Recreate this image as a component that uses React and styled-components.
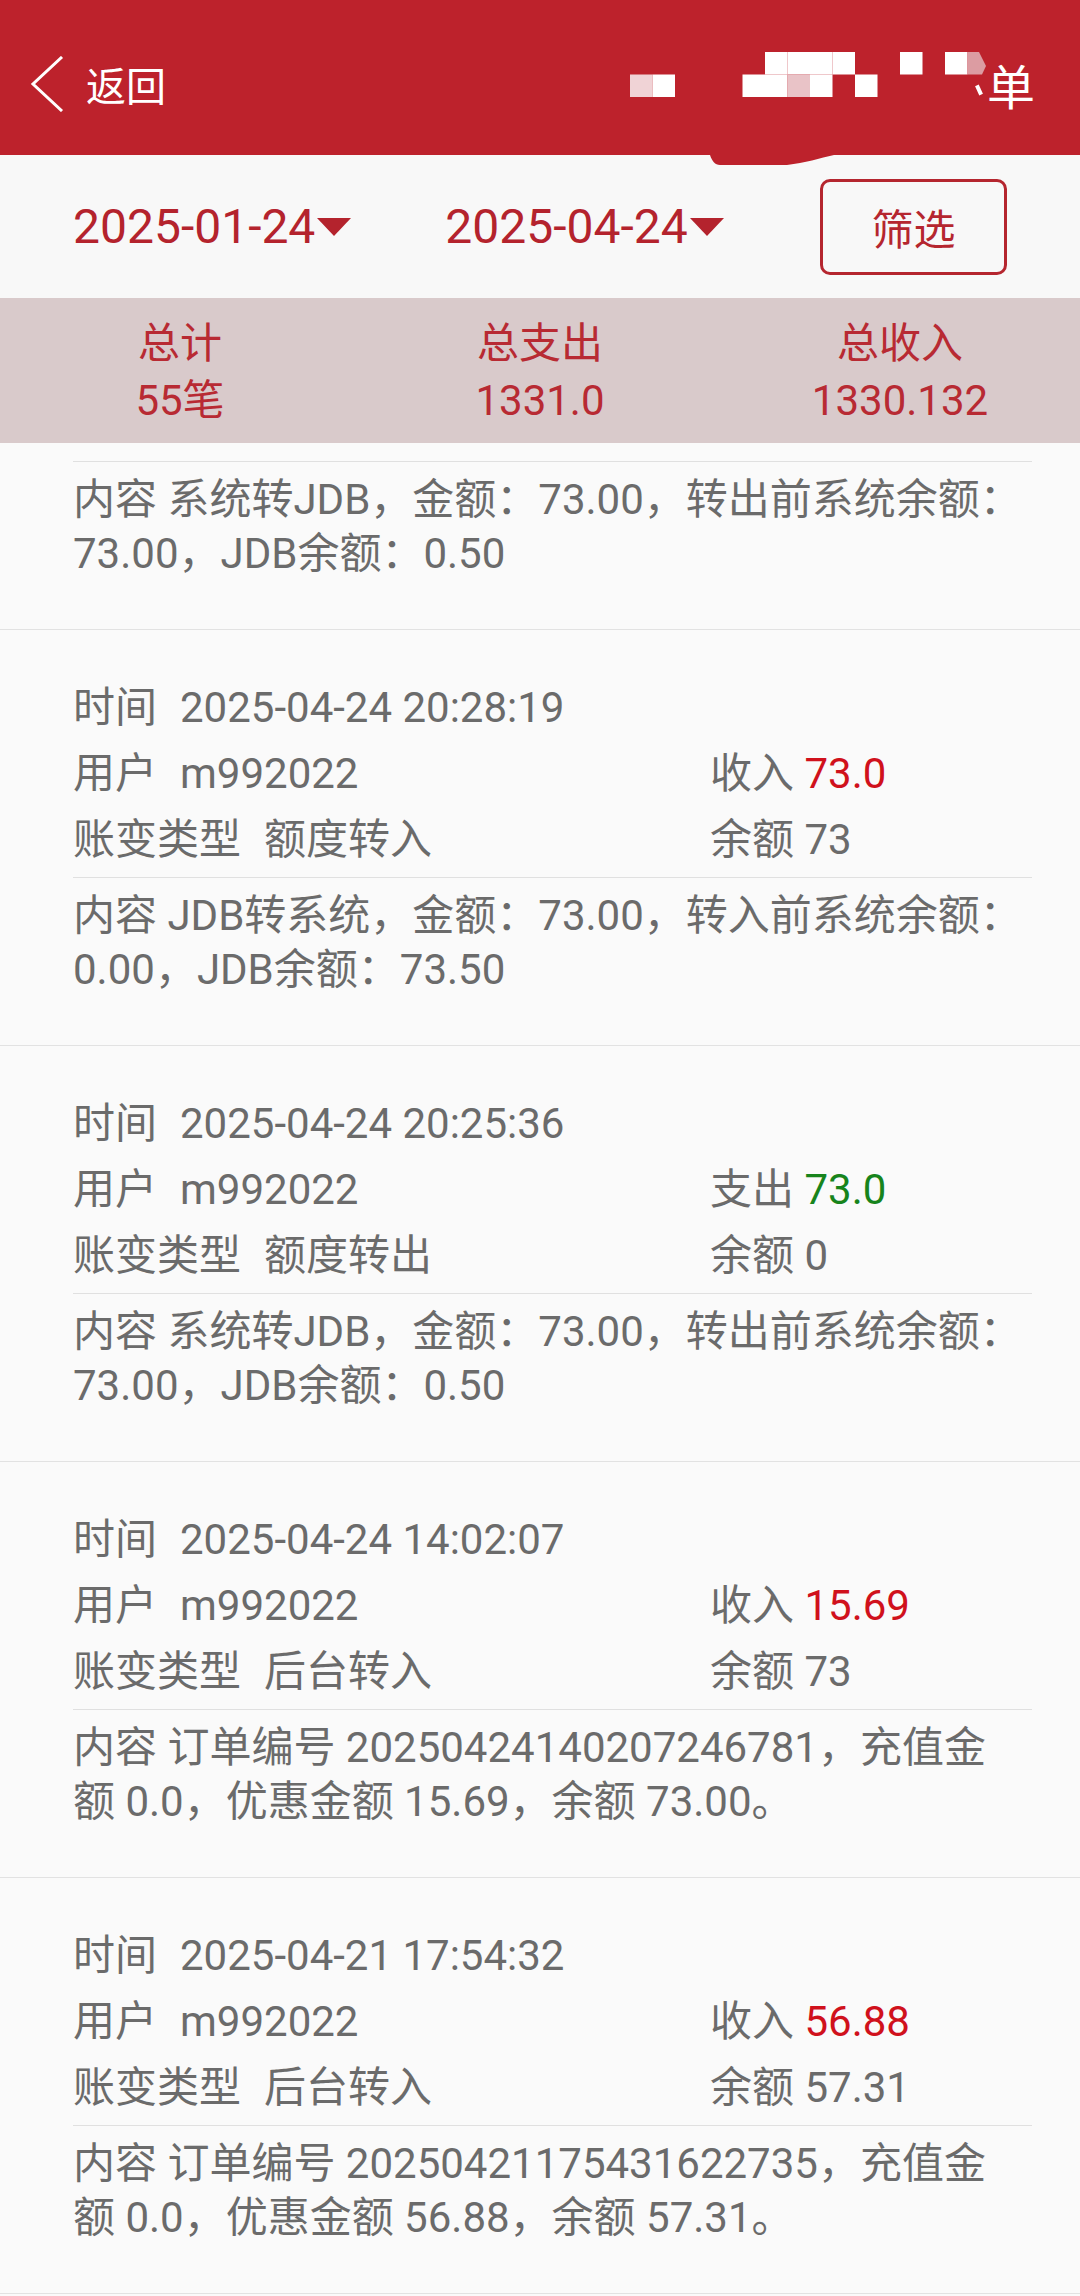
import styled, { createGlobalStyle } from "styled-components";

const GlobalStyle = createGlobalStyle`
  html, body {
    margin: 0;
    padding: 0;
    background: #fafafa;
  }
  body {
    font-family: Roboto, "Noto Sans CJK SC", sans-serif;
  }
`;

const Page = styled.div`
  height: 100vh;
  display: flex;
  flex-direction: column;
  overflow: hidden;
  background: #fafafa;
`;

const Header = styled.header`
  position: relative;
  z-index: 2;
  flex: none;
  height: 155px;
  box-sizing: border-box;
  padding: 12px 45px 0 30px;
  display: flex;
  align-items: center;
  background: #bd222c;
  color: #fff;
`;

const Back = styled.div`
  display: flex;
  align-items: center;
  gap: 22px;
  font-size: 40px;
`;

const Title = styled.div`
  margin-left: auto;
  display: flex;
  align-items: center;
  font-size: 48px;
`;

const Mosaic = styled.svg`
  display: block;
  margin-bottom: 18px;
`;

const Notch = styled.svg`
  position: absolute;
  left: 710px;
  top: 155px;
  display: block;
`;

const DateBar = styled.div`
  flex: none;
  height: 143px;
  box-sizing: border-box;
  padding: 0 73px;
  display: flex;
  align-items: center;
  gap: 94px;
  background: #f8f8f8;
`;

const DatePick = styled.div`
  flex: none;
  display: flex;
  align-items: center;
  gap: 2px;
  font-size: 48px;
  line-height: 58px;
  white-space: nowrap;
  color: #b4232d;
`;

const Caret = styled.span`
  width: 0;
  height: 0;
  border-left: 17px solid transparent;
  border-right: 17px solid transparent;
  border-top: 18px solid #b4232d;
`;

const FilterButton = styled.button`
  flex: none;
  margin-left: auto;
  width: 187px;
  height: 96px;
  box-sizing: border-box;
  border: 3px solid #b5262f;
  border-radius: 10px;
  background: transparent;
  color: #b5262f;
  font-family: inherit;
  font-size: 42px;
  padding: 0;
`;

const Summary = styled.div`
  flex: none;
  display: grid;
  grid-template-columns: repeat(3, 1fr);
  padding: 17px 0 14px;
  background: #d9cacb;
  color: #b82a33;
  font-size: 42px;
  line-height: 57px;
  text-align: center;
`;

const List = styled.div`
  flex: 1;
  overflow: hidden;
`;

const Scroller = styled.div`
  margin-top: -229px;
`;

const Card = styled.div`
  padding: 45px 48px 48px 73px;
  border-bottom: 1px solid #e2e2e2;
  color: #6b6b6b;
  font-size: 42px;
`;

const Fields = styled.div`
  display: grid;
  grid-template-columns: 637px 1fr;
  grid-auto-rows: 66px;
  line-height: 66px;
  white-space: nowrap;
`;

const Value = styled.span`
  margin-left: 23px;
`;

const Amount = styled.span`
  color: ${({ $out }) => ($out ? "#17841c" : "#d0111c")};
`;

const Divider = styled.div`
  height: 1px;
  margin-top: 4px;
  background: #e0e0e0;
`;

const Content = styled.p`
  margin: 0;
  padding: 11px 7px 0 0;
  line-height: 54px;
`;

const records = [
  {
    time: "2025-04-24 20:31:02",
    type: "额度转出",
    out: true,
    amount: "73.0",
    balance: "0",
    content: "内容 系统转JDB，金额：73.00，转出前系统余额：73.00，JDB余额：0.50",
  },
  {
    time: "2025-04-24 20:28:19",
    type: "额度转入",
    out: false,
    amount: "73.0",
    balance: "73",
    content: "内容 JDB转系统，金额：73.00，转入前系统余额：0.00，JDB余额：73.50",
  },
  {
    time: "2025-04-24 20:25:36",
    type: "额度转出",
    out: true,
    amount: "73.0",
    balance: "0",
    content: "内容 系统转JDB，金额：73.00，转出前系统余额：73.00，JDB余额：0.50",
  },
  {
    time: "2025-04-24 14:02:07",
    type: "后台转入",
    out: false,
    amount: "15.69",
    balance: "73",
    content: "内容 订单编号 20250424140207246781，充值金额 0.0，优惠金额 15.69，余额 73.00。",
  },
  {
    time: "2025-04-21 17:54:32",
    type: "后台转入",
    out: false,
    amount: "56.88",
    balance: "57.31",
    content: "内容 订单编号 20250421175431622735，充值金额 0.0，优惠金额 56.88，余额 57.31。",
  },
];

// redacted title blocks: [col, row, colour]
const blocks = [
  [6, 0, "#fff"], [7, 0, "#fff"], [8, 0, "#fff"], [9, 0, "#fff"],
  [12, 0, "#fff"], [14, 0, "#fff"],
  [0, 1, "#f0d3d6"], [1, 1, "#fff"], [5, 1, "#fff"], [6, 1, "#fff"],
  [7, 1, "#e9c3c7"], [8, 1, "#fff"], [10, 1, "#fff"],
];

function Record({ r }) {
  return (
    <Card>
      <Fields>
        <div>时间<Value>{r.time}</Value></div>
        <div />
        <div>用户<Value>m992022</Value></div>
        <div>
          {r.out ? "支出" : "收入"} <Amount $out={r.out}>{r.amount}</Amount>
        </div>
        <div>账变类型<Value>{r.type}</Value></div>
        <div>余额 {r.balance}</div>
      </Fields>
      <Divider />
      <Content>{r.content}</Content>
    </Card>
  );
}

export default function App() {
  return (
    <Page>
      <GlobalStyle />
      <Header>
        <Back>
          <svg width="34" height="56" viewBox="0 0 34 56">
            <polyline points="32,1 3,28 32,55" fill="none" stroke="#fff" strokeWidth="3" />
          </svg>
          返回
        </Back>
        <Title>
          <Mosaic width="357" height="45" viewBox="0 0 357 45">
            {blocks.map(([c, r, fill], i) => (
              <rect key={i} x={c * 22.5} y={r * 22.5} width="22.5" height="22.5" fill={fill} />
            ))}
            <polygon points="337.5,0 349,0 356,14 352,22.5 337.5,22.5" fill="#dc9ca2" />
            <rect x="347" y="33" width="4" height="10" fill="#fff" transform="rotate(-25 349 38)" />
          </Mosaic>
          单
        </Title>
        <Notch width="124" height="11" viewBox="0 0 124 11">
          <path d="M0 0 C2 6 5 10 10 10 L77 10 C95 8 110 3 124 0 Z" fill="#bd222c" />
        </Notch>
      </Header>
      <DateBar>
        <DatePick>2025-01-24<Caret /></DatePick>
        <DatePick>2025-04-24<Caret /></DatePick>
        <FilterButton>筛选</FilterButton>
      </DateBar>
      <Summary>
        <div>总计</div>
        <div>总支出</div>
        <div>总收入</div>
        <div>55笔</div>
        <div>1331.0</div>
        <div>1330.132</div>
      </Summary>
      <List>
        <Scroller>
          {records.map((r, i) => (
            <Record key={i} r={r} />
          ))}
        </Scroller>
      </List>
    </Page>
  );
}
